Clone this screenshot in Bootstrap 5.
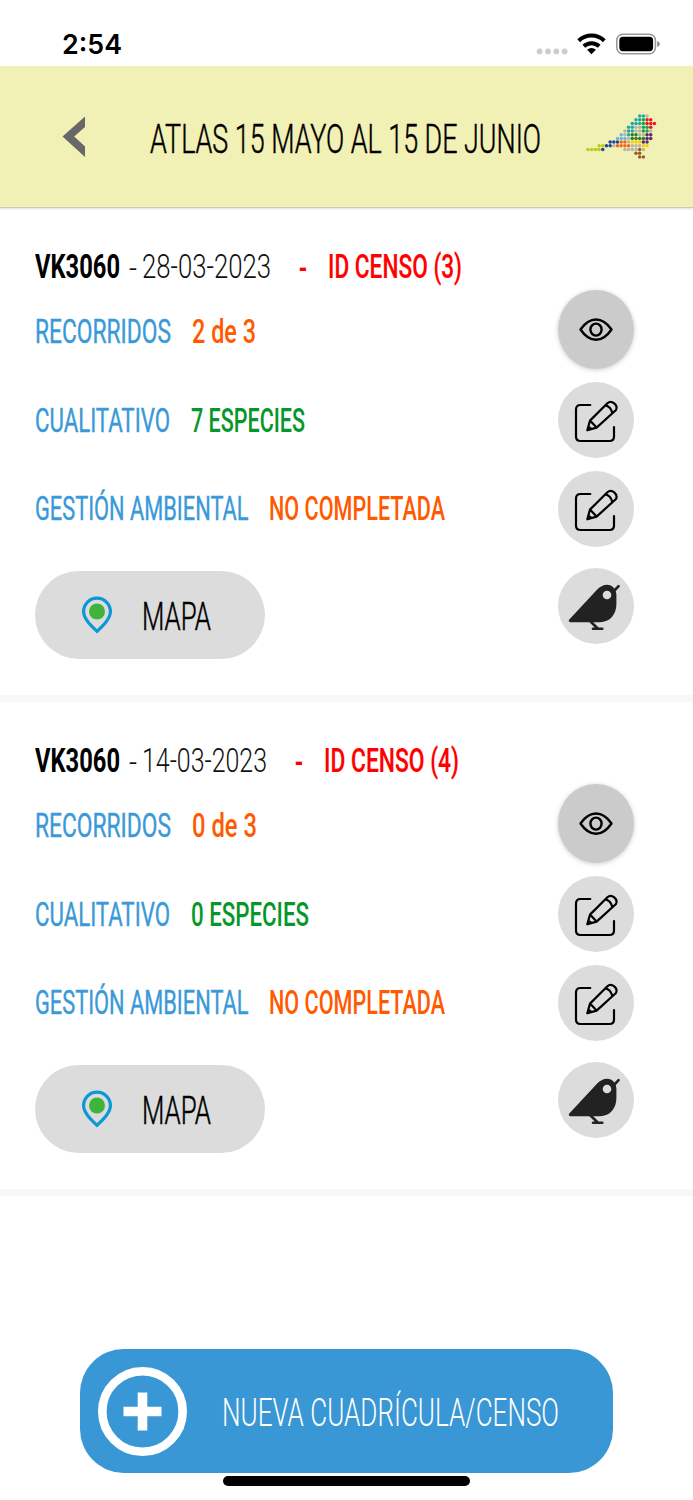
<!DOCTYPE html>
<html lang="es">
<head>
<meta charset="utf-8">
<meta name="viewport" content="width=device-width, initial-scale=1">
<title>Atlas</title>
<link href="https://cdn.jsdelivr.net/npm/bootstrap@5.3.0/dist/css/bootstrap.min.css" rel="stylesheet">
<style>
body{font-family:Roboto,"Liberation Sans",sans-serif;background:#fff;color:#000;height:1500px;overflow:hidden}
.statusbar{height:66px;padding:22px 33px 0 62px}
.clock{font:600 27px/45px Inter,sans-serif}
.signals{margin-top:6px}
.topbar{height:142px;background:#f2f1b5;border-bottom:1px solid #c9c9c0;box-shadow:0 1px 2px #0002;padding:0 35px 0 62px}
.fit{display:inline-block;white-space:nowrap;transform-origin:0 50%;flex:none}
.title{font-size:41px;font-weight:300;-webkit-text-stroke:.5px;line-height:48px;margin:5px 0 0 64px}
.census{height:494px;border-bottom:7px solid #f7f7f7;padding:36px 59px 0 35px}
.head{height:44px;font-size:33px;line-height:45px}
.dash{padding-top:2px}
.line{height:88.5px;font-size:32.5px;font-weight:500;line-height:44px;gap:20.5px}
.strong{font-weight:700}
.date{color:#111;font-weight:300}
.idc{color:#f00;font-weight:500;-webkit-text-stroke:.2px}
.lbl{color:#3a99d8;font-weight:400;-webkit-text-stroke:.4px}
.warn{color:#ff5a00}
.good{color:#06962a}
.round{width:76px;height:76px;border-radius:50%;background:#dcdcdc;padding:0;border:0;flex:none}
.eye{height:79px;background:#cbcbcb;box-shadow:0 1px 5px #0003;margin:2px 0 12.5px}
.next{margin-top:13px}
.perch{margin-top:21.5px}
.pill{width:230px;height:88px;border-radius:44px;background:#dcdcdc;border:0;padding:0 0 0 46px;margin-top:17px;font-size:38.5px;font-weight:300;-webkit-text-stroke:.5px}
.pill .fit{margin:4px 0 0 28.5px}
.add{width:533px;height:124px;border-radius:44px;background:#3897d4;color:#fff;border:0;padding:0 0 0 18px;margin:153px auto 0 80px;font-size:38.5px;font-weight:300}
.add .fit{margin:4px 0 0 35px}
.homebar{width:247px;height:9.5px;border-radius:5px;background:#000;margin:3px 0 0 223px}
svg{display:block;flex:none}
</style>
</head>
<body>
<div class="statusbar d-flex justify-content-between align-items-start">
  <span class="clock fit" data-w="60">2:54</span>
  <svg class="signals" width="124" height="28" viewBox="536 28 124 28">
    <g fill="#ccc"><circle cx="539.6" cy="51.4" r="2.9"/><circle cx="548" cy="51.4" r="2.9"/><circle cx="556.3" cy="51.4" r="2.9"/><circle cx="564.6" cy="51.4" r="2.9"/></g>
    <g fill="none" stroke="#000" stroke-width="4"><path d="M578.7 40.7a18.5 18.5 0 0 1 25.6 0"/><path d="M583.8 46.2a11.2 11.2 0 0 1 15.4 0"/></g>
    <path d="M591.5 54.3l-4.4-4.5a6.4 6.4 0 0 1 8.8 0z"/>
    <rect x="616.8" y="34.3" width="38.6" height="19.4" rx="6" fill="none" stroke="#999" stroke-width="1.6"/>
    <rect x="619.3" y="36.8" width="33.8" height="14.4" rx="3.6"/>
    <path d="M657.2 40.9q2.7 1 2.7 3.1t-2.7 3.1z" fill="#888"/>
  </svg>
</div>
<header class="topbar d-flex align-items-center">
  <svg width="24" height="42" viewBox="0 0 24 42"><path d="M23 .5v10.5L12.2 20.5 23 30.6V41L.5 20.5z" fill="#686868"/></svg>
  <span class="title fit" data-w="391">ATLAS 15 MAYO AL 15 DE JUNIO</span>
  <svg id="logo" class="ms-auto" width="72" height="46" viewBox="0 0 72 46"></svg>
</header>
<main id="list"></main>
<button class="add d-flex align-items-center">
  <svg width="89" height="89" viewBox="0 0 89 89"><circle cx="44.5" cy="44.5" r="40.2" fill="none" stroke="#fff" stroke-width="8.6"/><path d="M44.5 25.5v38M25.5 44.5h38" stroke="#fff" stroke-width="9.6"/></svg>
  <span class="fit" data-w="337">NUEVA CUADRÍCULA/CENSO</span>
</button>
<div class="homebar"></div>

<script src="https://cdn.jsdelivr.net/npm/bootstrap@5.3.0/dist/js/bootstrap.bundle.min.js"></script>
<script>
const edit = cls => `<button class="round ${cls}"><svg width="76" height="76" viewBox="0 0 76 76" fill="none" stroke="#000" stroke-width="2.2" stroke-linecap="round" stroke-linejoin="round"><path d="M32.3 23H22.5Q18 23 18 27.5V54.5Q18 59 22.5 59H51.5Q56 59 56 54.5V45"/><path d="M29.3 48.3L32 38.6 49.4 21.2Q52.6 18.3 56.2 21.4T58 28L38.6 45.6ZM32 38.6L38.6 45.6M47.2 23.4Q52.8 24.3 54.2 31M30.5 44.5L33.5 47"/></svg></button>`;
const items = [
  {date:'28-03-2023', dw:129, id:'3', idw:134, rec:'2 de 3', rw:64, esp:'7 ESPECIES', ew:114},
  {date:'14-03-2023', dw:125, id:'4', idw:135, rec:'0 de 3', rw:65, esp:'0 ESPECIES', ew:118}
];
document.getElementById('list').innerHTML = items.map(c => `
<section class="census">
  <div class="head d-flex">
    <span class="fit strong" data-w="85">VK3060</span>
    <span class="fit date dash" data-w="8" style="margin-left:9px">-</span>
    <span class="fit date" data-w="${c.dw}" style="margin-left:5px">${c.date}</span>
    <span class="fit idc dash" data-w="8" style="margin-left:28px">-</span>
    <span class="fit idc" data-w="${c.idw}" style="margin-left:20.5px">ID CENSO (${c.id})</span>
  </div>
  <div class="d-flex justify-content-between">
    <div>
      <div class="line d-flex align-items-center"><span class="fit lbl" data-w="136">RECORRIDOS</span><span class="fit warn" data-w="${c.rw}">${c.rec}</span></div>
      <div class="line d-flex align-items-center"><span class="fit lbl" data-w="135">CUALITATIVO</span><span class="fit good" data-w="${c.ew}">${c.esp}</span></div>
      <div class="line d-flex align-items-center"><span class="fit lbl" data-w="213.5">GESTIÓN AMBIENTAL</span><span class="fit warn" data-w="176">NO COMPLETADA</span></div>
      <button class="pill d-flex align-items-center">
        <svg width="32" height="38" viewBox="0 0 32 38"><path d="M16 35.3C10 29.5 2.6 22.8 2.6 15.6a13.4 13.4 0 0 1 26.8 0C29.4 22.8 22 29.5 16 35.3z" fill="none" stroke="#0a98d8" stroke-width="3.2"/><circle cx="16" cy="15.5" r="8" fill="#3fb33b"/></svg>
        <span class="fit" data-w="69">MAPA</span>
      </button>
    </div>
    <div class="d-flex flex-column">
      <button class="round eye"><svg width="76" height="79" viewBox="0 0 76 79" fill="none" stroke="#000" stroke-width="2.4" stroke-linejoin="round"><path d="M22.5 39.5Q29.5 29.5 38 29.5T53.5 39.5Q46.5 49.8 38 49.8T22.5 39.5z"/><ellipse cx="38" cy="39.6" rx="5.6" ry="6"/></svg></button>
      ${edit('')}${edit('next')}
      <button class="round perch"><svg width="76" height="76" viewBox="0 0 76 76"><path fill="#222" d="M11.3 51.6L38.5 22.2Q43.5 16.7 49 16.7C54.5 16.7 58.4 21 58.4 27V36C58.4 46.5 52 54.2 42 54.2H12.4Q9.8 53.8 11.3 51.6z"/><path d="M56 23L60.6 18.2M32.5 53.5L39.5 60.3M35 60.8H44.3" stroke="#222" stroke-width="2.6" stroke-linecap="round" fill="none"/><circle cx="49" cy="27" r="4.3" fill="#dcdcdc"/></svg></button>
    </div>
  </div>
</section>`).join('');

/* Mosaic bird: one letter per dot colour */
const tint = {t:'#1fa9ab',g:'#b9b6a8',r:'#e8192c',e:'#17a650',d:'#2c7d2e',p:'#5b2a6e',l:'#6bb6e0',n:'#1c4595',o:'#ee6a24',y:'#f6cf14',v:'#bccb12',b:'#9a5a2c'};
const rows = [
  '              ttg',
  '             tterr',
  '            ttterrr',
  '           ttggeer',
  '          gttggeeg',
  '         lgtddggpp',
  '        lllgddddpp',
  '      nnnoogyyypp',
  '   vvnngoooogggyy',
  'vvvvn     ggggbg',
  '             bb',
  '              bb'];
document.getElementById('logo').innerHTML = rows.map((r,y)=>[...r].map((k,x)=>k===' '?'':
 `<circle cx="${(2+x*3.69).toFixed(2)}" cy="${(2+y*3.73).toFixed(2)}" r="1.75" fill="${tint[k]}"/>`).join('')).join('');

document.querySelectorAll('.fit').forEach(el => {
  const w = +el.dataset.w, n = el.getBoundingClientRect().width;
  el.style.transform = `scaleX(${w/n})`;
  el.style.marginRight = (w-n)+'px';
});
</script>
</body>
</html>
